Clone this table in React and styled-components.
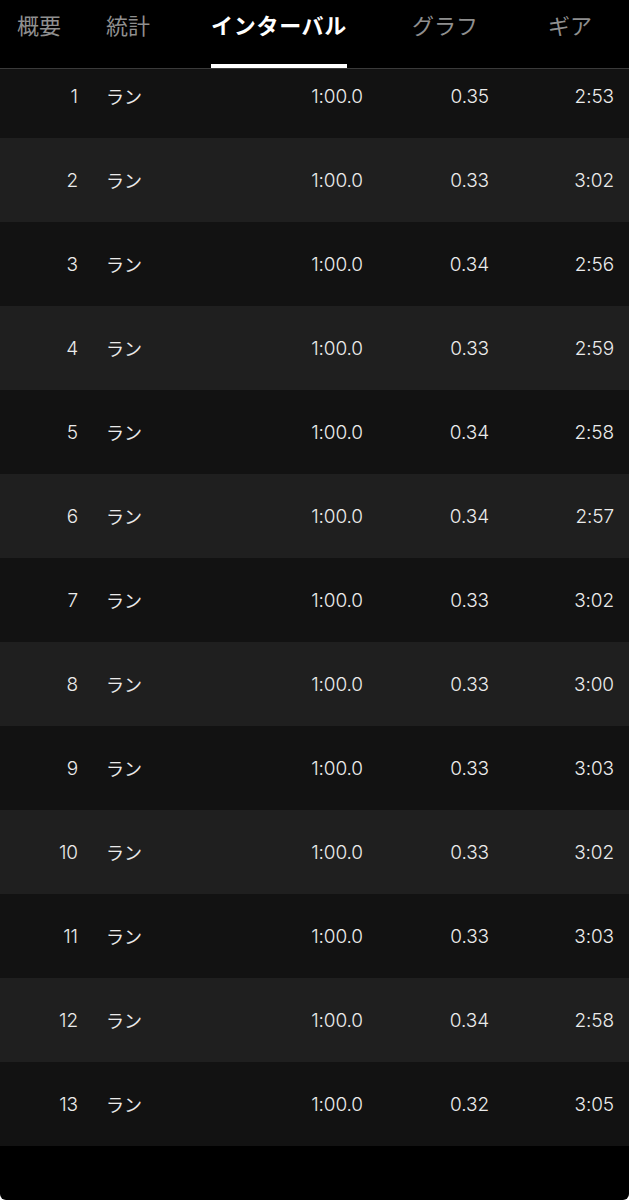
import styled, { createGlobalStyle } from "styled-components";

const GlobalStyle = createGlobalStyle`
  html, body {
    margin: 0;
    padding: 0;
    background: #ffffff;
  }
`;

const Screen = styled.div`
  width: 629px;
  height: 1200px;
  background: #000;
  border-radius: 0 0 6px 6px;
  overflow: hidden;
  display: flex;
  flex-direction: column;
  font-family: Inter, "Noto Sans CJK JP", sans-serif;
  color: #ebebeb;
`;

const TabBar = styled.nav`
  height: 68px;
  flex-shrink: 0;
  display: flex;
  padding-left: 17px;
  border-bottom: 1px solid #3a3a3a;
  box-sizing: content-box;
`;

const Tab = styled.div`
  box-sizing: border-box;
  height: 68px;
  padding-top: 9px;
  margin-left: ${(p) => p.$offset}px;
  font-family: "Noto Sans CJK JP", sans-serif;
  font-size: 22px;
  line-height: 30px;
  font-weight: ${(p) => (p.$active ? 700 : 400)};
  letter-spacing: ${(p) => (p.$active ? "0.7px" : "0")};
  color: ${(p) => (p.$active ? "#ffffff" : "#8f8f8f")};
  border-bottom: 4px solid ${(p) => (p.$active ? "#ffffff" : "transparent")};
  white-space: nowrap;
`;

const Viewport = styled.div`
  flex: 1;
  overflow: hidden;
`;

const List = styled.div`
  margin-top: -15px;
`;

const Row = styled.div`
  height: 84px;
  display: grid;
  grid-template-columns: 78px 165px 120px 126px 125px;
  align-items: center;
  background: ${(p) => (p.$alt ? "#1f1f1f" : "#121212")};
  font-size: 19px;
  font-weight: 300;
  letter-spacing: -0.1px;
`;

const Num = styled.span`
  text-align: right;
`;

const Name = styled.span`
  padding-left: 28px;
  font-family: "Noto Sans CJK JP", sans-serif;
  font-size: 18px;
  font-weight: 400;
`;

const Value = styled.span`
  text-align: right;
`;

const tabs = [
  { label: "概要", offset: 0 },
  { label: "統計", offset: 45 },
  { label: "インターバル", offset: 61, active: true },
  { label: "グラフ", offset: 65 },
  { label: "ギア", offset: 70 },
];

const laps = [
  ["0.35", "2:53"],
  ["0.33", "3:02"],
  ["0.34", "2:56"],
  ["0.33", "2:59"],
  ["0.34", "2:58"],
  ["0.34", "2:57"],
  ["0.33", "3:02"],
  ["0.33", "3:00"],
  ["0.33", "3:03"],
  ["0.33", "3:02"],
  ["0.33", "3:03"],
  ["0.34", "2:58"],
  ["0.32", "3:05"],
];

const App = () => {
  return (
    <>
      <GlobalStyle />
      <Screen>
        <TabBar>
          {tabs.map((t) => (
            <Tab key={t.label} $offset={t.offset} $active={t.active}>
              {t.label}
            </Tab>
          ))}
        </TabBar>
        <Viewport>
          <List>
            {laps.map(([dist, pace], i) => (
              <Row key={i} $alt={i % 2 === 1}>
                <Num>{i + 1}</Num>
                <Name>ラン</Name>
                <Value>1:00.0</Value>
                <Value>{dist}</Value>
                <Value>{pace}</Value>
              </Row>
            ))}
          </List>
        </Viewport>
      </Screen>
    </>
  );
};

export default App;
